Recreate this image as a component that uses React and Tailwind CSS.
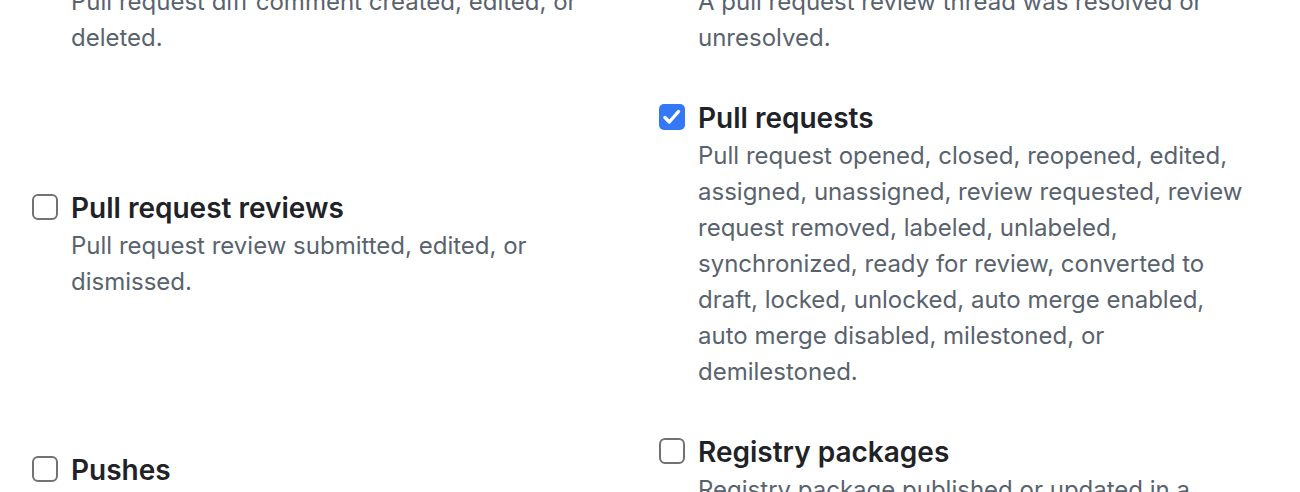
import React from "react";

const font = { fontFamily: "Inter, 'Noto Sans', 'Liberation Sans', sans-serif" };

function Check({ checked }) {
  if (checked) {
    return (
      <span className="mt-[6px] flex h-[26px] w-[26px] shrink-0 items-center justify-center rounded-[5px] bg-[#3478f6]">
        <svg width="26" height="26" viewBox="0 0 26 26" fill="none">
          <path d="M6 13.5l4.3 4.5L19.5 7.5" stroke="white" strokeWidth="3.4" strokeLinecap="round" strokeLinejoin="round" />
        </svg>
      </span>
    );
  }
  return <span className="mt-[6px] block h-[26px] w-[26px] shrink-0 rounded-[6px] border-2 border-[#727272] bg-white" />;
}

function Item({ title, desc, checked, textW }) {
  return (
    <div className="flex items-start gap-[13px]">
      <Check checked={checked} />
      <div className={textW}>
        <div className="text-[28px] font-semibold leading-[40px] text-[#1f2328]">{title}</div>
        <div className="text-[24px] leading-[36px] text-[#59636e]">{desc}</div>
      </div>
    </div>
  );
}

export default function App() {
  const rows = [
    [
      { title: "Pull request review comments", desc: "Pull request diff comment created, edited, or deleted." },
      { title: "Pull request review threads", desc: "A pull request review thread was resolved or unresolved." },
    ],
    [
      { title: "Pull request reviews", desc: "Pull request review submitted, edited, or dismissed." },
      {
        title: "Pull requests",
        checked: true,
        desc: "Pull request opened, closed, reopened, edited, assigned, unassigned, review requested, review request removed, labeled, unlabeled, synchronized, ready for review, converted to draft, locked, unlocked, auto merge enabled, auto merge disabled, milestoned, or demilestoned.",
      },
    ],
    [
      { title: "Pushes", desc: "Git push to a repository." },
      { title: "Registry packages", desc: "Registry package published or updated in a repository." },
    ],
  ];
  return (
    <div className="h-[492px] w-[1300px] overflow-hidden bg-white" style={font}>
      <div className="-mt-[56px] grid grid-cols-[627px_1fr] items-center gap-y-[42px] pl-[32px]">
        {rows.map((r, i) => (
          <React.Fragment key={i}>
            <Item {...r[0]} textW="w-[525px]" />
            <Item {...r[1]} textW="w-[555px]" />
          </React.Fragment>
        ))}
      </div>
    </div>
  );
}
